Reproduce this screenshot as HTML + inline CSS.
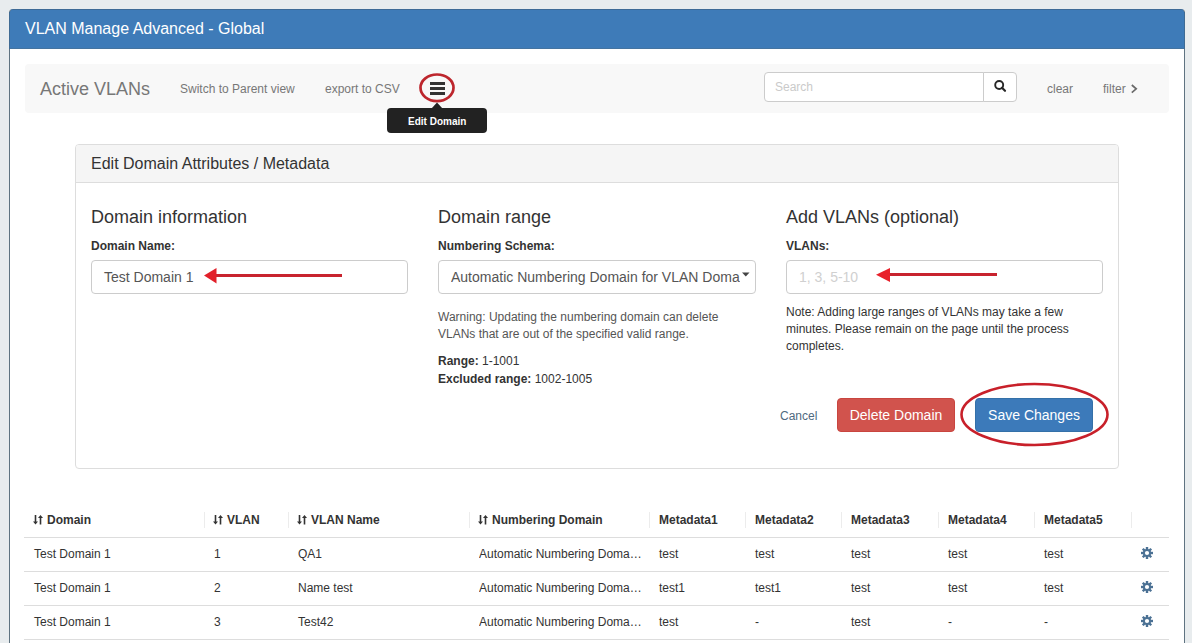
<!DOCTYPE html>
<html><head><meta charset="utf-8">
<style>
*{box-sizing:border-box;margin:0;padding:0}
html,body{width:1192px;height:643px;overflow:hidden}
body{background:#e8ecee;font-family:"Liberation Sans",sans-serif;color:#333;position:relative}
.a{position:absolute;white-space:nowrap}
#outer{position:absolute;left:9px;top:9px;width:1176px;height:700px;background:linear-gradient(#3e7bb8 0 38px,#fff 38px);border:1px solid #5f7381;border-top-color:#3d6a96;border-radius:4px 4px 0 0;overflow:hidden}
#hdr{position:absolute;left:0;top:0;width:100%;height:39px;background:#3e7bb8;border-bottom:1px solid #4574a0}
#tb{position:absolute;left:15px;top:54px;width:1144px;height:49px;background:#f8f8f8;border-radius:4px}
.t12{font-size:12px;line-height:17px}
.gray{color:#777}
.inp{position:absolute;background:#fff;border:1px solid #ccc;border-radius:4px}
#ed{position:absolute;left:75px;top:144px;width:1044px;height:325px;border:1px solid #ddd;border-radius:4px;background:#fff}
#edh{position:absolute;left:0;top:0;width:100%;height:38px;background:#f5f5f5;border-bottom:1px solid #ddd;border-radius:3px 3px 0 0}
.h18{font-size:18px;line-height:20px;color:#333}
.lbl{font-size:12px;line-height:17px;font-weight:bold;color:#333}
.btn{position:absolute;border-radius:4px;color:#fff;font-size:14px;line-height:20px;text-align:center}
th,td{font-size:12px}
.th{font-weight:bold;font-size:12px;line-height:17px;color:#333}
.td{font-size:12px;line-height:17px;color:#333}
.hl{position:absolute;left:24px;width:1145px;height:1px;background:#ddd}
.sep{position:absolute;top:512px;width:1px;height:16px;background:#ececec}
</style></head><body>

<div id="outer">
  <div id="hdr"></div>
  <div id="tb"></div>
</div>
<div class="a" style="left:9px;top:12px;width:1px;height:37px;background:#3f6b94"></div>
<div class="a" style="left:1184px;top:12px;width:1px;height:37px;background:#3f6b94"></div>

<!-- header title -->
<div class="a" style="left:25px;top:20px;font-size:16px;line-height:18px;color:#fff">VLAN Manage Advanced - Global</div>

<!-- toolbar -->
<div class="a gray" style="left:40px;top:79px;font-size:18px;line-height:20px">Active VLANs</div>
<div class="a t12 gray" style="left:180px;top:81px">Switch to Parent view</div>
<div class="a t12 gray" style="left:325px;top:81px">export to CSV</div>

<!-- hamburger -->
<div class="a" style="left:430px;top:82px;width:15px;height:2.5px;background:#333"></div>
<div class="a" style="left:430px;top:87px;width:15px;height:2.5px;background:#333"></div>
<div class="a" style="left:430px;top:92px;width:15px;height:2.5px;background:#333"></div>
<svg class="a" style="left:417px;top:71px" width="40" height="34"><ellipse cx="20" cy="16.8" rx="16.5" ry="13.3" fill="none" stroke="#bd262d" stroke-width="2.7"/></svg>

<!-- tooltip -->
<svg class="a" style="left:431px;top:102px" width="12" height="7"><path d="M0.5 6.5 L6 0.5 L11.5 6.5 Z" fill="#222"/></svg>
<div class="a" style="left:387px;top:108px;width:100px;height:25px;background:#222;border-radius:4px"></div>
<div class="a" style="left:408px;top:115px;font-size:10px;line-height:14px;font-weight:bold;color:#fff">Edit Domain</div>

<!-- search -->
<div class="inp" style="left:764px;top:72px;width:220px;height:30px;border-radius:4px 0 0 4px"></div>
<div class="a t12" style="left:775px;top:79px;color:#cacaca">Search</div>
<div class="inp" style="left:983px;top:72px;width:34px;height:30px;border-radius:0 4px 4px 0"></div>
<svg class="a" style="left:992px;top:78px" width="16" height="16"><circle cx="7.2" cy="7" r="4" fill="none" stroke="#262626" stroke-width="1.9"/><line x1="10" y1="9.8" x2="13" y2="12.8" stroke="#262626" stroke-width="2.2" stroke-linecap="round"/></svg>
<div class="a t12 gray" style="left:1047px;top:81px">clear</div>
<div class="a t12 gray" style="left:1103px;top:81px">filter</div>
<svg class="a" style="left:1129px;top:83px" width="10" height="11"><path d="M2.8 2 L7.2 5.8 L2.8 9.6" fill="none" stroke="#6a6a6a" stroke-width="1.7"/></svg>

<!-- edit domain panel -->
<div id="ed"><div id="edh"></div></div>
<div class="a" style="left:91px;top:155px;font-size:16px;line-height:18px;color:#333">Edit Domain Attributes / Metadata</div>

<div class="a h18" style="left:91px;top:207px">Domain information</div>
<div class="a lbl" style="left:91px;top:238px">Domain Name:</div>
<div class="inp" style="left:91px;top:260px;width:317px;height:34px"></div>
<div class="a" style="left:104px;top:267px;font-size:14px;line-height:20px;color:#555">Test Domain 1</div>

<div class="a h18" style="left:438px;top:207px">Domain range</div>
<div class="a lbl" style="left:438px;top:238px">Numbering Schema:</div>
<div class="inp" style="left:438px;top:260px;width:318px;height:34px"></div>
<div class="a" style="left:451px;top:267px;width:289px;overflow:hidden;font-size:14px;line-height:20px;color:#555">Automatic Numbering Domain for VLAN Domain 1</div>
<svg class="a" style="left:742px;top:272px" width="8" height="5"><path d="M0 0.5 L7.5 0.5 L3.75 4.5 Z" fill="#444"/></svg>
<div class="a t12" style="left:438px;top:309px;color:#555">Warning: Updating the numbering domain can delete<br>VLANs that are out of the specified valid range.</div>
<div class="a t12" style="left:438px;top:353px;color:#333"><b>Range:</b> 1-1001</div>
<div class="a t12" style="left:438px;top:371px;color:#333"><b>Excluded range:</b> 1002-1005</div>

<div class="a h18" style="left:786px;top:207px">Add VLANs (optional)</div>
<div class="a lbl" style="left:786px;top:238px">VLANs:</div>
<div class="inp" style="left:786px;top:260px;width:317px;height:34px"></div>
<div class="a" style="left:799px;top:267px;font-size:14px;line-height:20px;color:#d0d0d0">1, 3, 5-10</div>
<div class="a t12" style="left:786px;top:304px;color:#333">Note: Adding large ranges of VLANs may take a few<br>minutes. Please remain on the page until the process<br>completes.</div>

<!-- arrows -->
<svg class="a" style="left:200px;top:265px" width="150" height="22"><line x1="14" y1="10.5" x2="142" y2="10.5" stroke="#c8232e" stroke-width="3"/><path d="M4 10.5 L16.5 3 L16.5 18.5 Z" fill="#e2202a"/></svg>
<svg class="a" style="left:870px;top:265px" width="130" height="20"><line x1="18" y1="9.5" x2="127" y2="9.5" stroke="#c8232e" stroke-width="3"/><path d="M6 9.8 L20 3 L20 17 Z" fill="#e8202a"/></svg>

<!-- buttons -->
<div class="a t12" style="left:780px;top:408px;color:#4f6a80">Cancel</div>
<div class="btn" style="left:837px;top:398px;width:118px;height:34px;background:#d1534d;border:1px solid #c9453f;padding-top:6px">Delete Domain</div>
<div class="btn" style="left:975px;top:398px;width:118px;height:34px;background:#3c7aba;border:1px solid #3470a8;padding-top:6px">Save Changes</div>
<svg class="a" style="left:958px;top:381px" width="154" height="67"><ellipse cx="76.5" cy="33.5" rx="73" ry="30.5" fill="none" stroke="#c8202a" stroke-width="2.6"/></svg>

<!-- table -->
<div class="hl" style="top:537px"></div>
<div class="hl" style="top:571px"></div>
<div class="hl" style="top:605px"></div>
<div class="hl" style="top:639px"></div>
<div class="sep" style="left:204px"></div>
<div class="sep" style="left:288px"></div>
<div class="sep" style="left:469px"></div>
<div class="sep" style="left:649px"></div>
<div class="sep" style="left:745px"></div>
<div class="sep" style="left:841px"></div>
<div class="sep" style="left:938px"></div>
<div class="sep" style="left:1034px"></div>
<div class="sep" style="left:1131px"></div>

<svg class="a" style="left:33px;top:514px" width="11" height="12"><path d="M2.5 1 V8.5" stroke="#333" stroke-width="1.6"/><path d="M0 7.5 H5 L2.5 10.5 Z" fill="#333"/><path d="M7.5 3 V10.5" stroke="#333" stroke-width="1.6"/><path d="M5 4 H10 L7.5 1 Z" fill="#333"/></svg>
<div class="a th" style="left:47px;top:512px">Domain</div>
<svg class="a" style="left:213px;top:514px" width="11" height="12"><path d="M2.5 1 V8.5" stroke="#333" stroke-width="1.6"/><path d="M0 7.5 H5 L2.5 10.5 Z" fill="#333"/><path d="M7.5 3 V10.5" stroke="#333" stroke-width="1.6"/><path d="M5 4 H10 L7.5 1 Z" fill="#333"/></svg>
<div class="a th" style="left:227px;top:512px">VLAN</div>
<svg class="a" style="left:297px;top:514px" width="11" height="12"><path d="M2.5 1 V8.5" stroke="#333" stroke-width="1.6"/><path d="M0 7.5 H5 L2.5 10.5 Z" fill="#333"/><path d="M7.5 3 V10.5" stroke="#333" stroke-width="1.6"/><path d="M5 4 H10 L7.5 1 Z" fill="#333"/></svg>
<div class="a th" style="left:311px;top:512px">VLAN Name</div>
<svg class="a" style="left:478px;top:514px" width="11" height="12"><path d="M2.5 1 V8.5" stroke="#333" stroke-width="1.6"/><path d="M0 7.5 H5 L2.5 10.5 Z" fill="#333"/><path d="M7.5 3 V10.5" stroke="#333" stroke-width="1.6"/><path d="M5 4 H10 L7.5 1 Z" fill="#333"/></svg>
<div class="a th" style="left:492px;top:512px">Numbering Domain</div>
<div class="a th" style="left:659px;top:512px">Metadata1</div>
<div class="a th" style="left:755px;top:512px">Metadata2</div>
<div class="a th" style="left:851px;top:512px">Metadata3</div>
<div class="a th" style="left:948px;top:512px">Metadata4</div>
<div class="a th" style="left:1044px;top:512px">Metadata5</div>
<div class="a td" style="left:34px;top:546px">Test Domain 1</div>
<div class="a td" style="left:214px;top:546px">1</div>
<div class="a td" style="left:298px;top:546px">QA1</div>
<div class="a td" style="left:479px;top:546px;width:163px;overflow:hidden;text-overflow:ellipsis">Automatic Numbering Domain for VLAN Domain 1</div>
<div class="a td" style="left:659px;top:546px">test</div>
<div class="a td" style="left:755px;top:546px">test</div>
<div class="a td" style="left:851px;top:546px">test</div>
<div class="a td" style="left:948px;top:546px">test</div>
<div class="a td" style="left:1044px;top:546px">test</div>
<svg class="a" style="left:1140px;top:546px" width="14" height="14"><g transform="translate(7 7)" fill="#4b7194"><rect x="-1.2" y="-6" width="2.4" height="12" transform="rotate(0)"/><rect x="-1.2" y="-6" width="2.4" height="12" transform="rotate(45)"/><rect x="-1.2" y="-6" width="2.4" height="12" transform="rotate(90)"/><rect x="-1.2" y="-6" width="2.4" height="12" transform="rotate(135)"/><circle r="4.1"/></g><circle cx="7" cy="7" r="2.1" fill="#fff"/></svg>
<div class="a td" style="left:34px;top:580px">Test Domain 1</div>
<div class="a td" style="left:214px;top:580px">2</div>
<div class="a td" style="left:298px;top:580px">Name test</div>
<div class="a td" style="left:479px;top:580px;width:163px;overflow:hidden;text-overflow:ellipsis">Automatic Numbering Domain for VLAN Domain 1</div>
<div class="a td" style="left:659px;top:580px">test1</div>
<div class="a td" style="left:755px;top:580px">test1</div>
<div class="a td" style="left:851px;top:580px">test</div>
<div class="a td" style="left:948px;top:580px">test</div>
<div class="a td" style="left:1044px;top:580px">test</div>
<svg class="a" style="left:1140px;top:580px" width="14" height="14"><g transform="translate(7 7)" fill="#4b7194"><rect x="-1.2" y="-6" width="2.4" height="12" transform="rotate(0)"/><rect x="-1.2" y="-6" width="2.4" height="12" transform="rotate(45)"/><rect x="-1.2" y="-6" width="2.4" height="12" transform="rotate(90)"/><rect x="-1.2" y="-6" width="2.4" height="12" transform="rotate(135)"/><circle r="4.1"/></g><circle cx="7" cy="7" r="2.1" fill="#fff"/></svg>
<div class="a td" style="left:34px;top:614px">Test Domain 1</div>
<div class="a td" style="left:214px;top:614px">3</div>
<div class="a td" style="left:298px;top:614px">Test42</div>
<div class="a td" style="left:479px;top:614px;width:163px;overflow:hidden;text-overflow:ellipsis">Automatic Numbering Domain for VLAN Domain 1</div>
<div class="a td" style="left:659px;top:614px">test</div>
<div class="a td" style="left:755px;top:614px">-</div>
<div class="a td" style="left:851px;top:614px">test</div>
<div class="a td" style="left:948px;top:614px">-</div>
<div class="a td" style="left:1044px;top:614px">-</div>
<svg class="a" style="left:1140px;top:614px" width="14" height="14"><g transform="translate(7 7)" fill="#4b7194"><rect x="-1.2" y="-6" width="2.4" height="12" transform="rotate(0)"/><rect x="-1.2" y="-6" width="2.4" height="12" transform="rotate(45)"/><rect x="-1.2" y="-6" width="2.4" height="12" transform="rotate(90)"/><rect x="-1.2" y="-6" width="2.4" height="12" transform="rotate(135)"/><circle r="4.1"/></g><circle cx="7" cy="7" r="2.1" fill="#fff"/></svg>
</body></html>
